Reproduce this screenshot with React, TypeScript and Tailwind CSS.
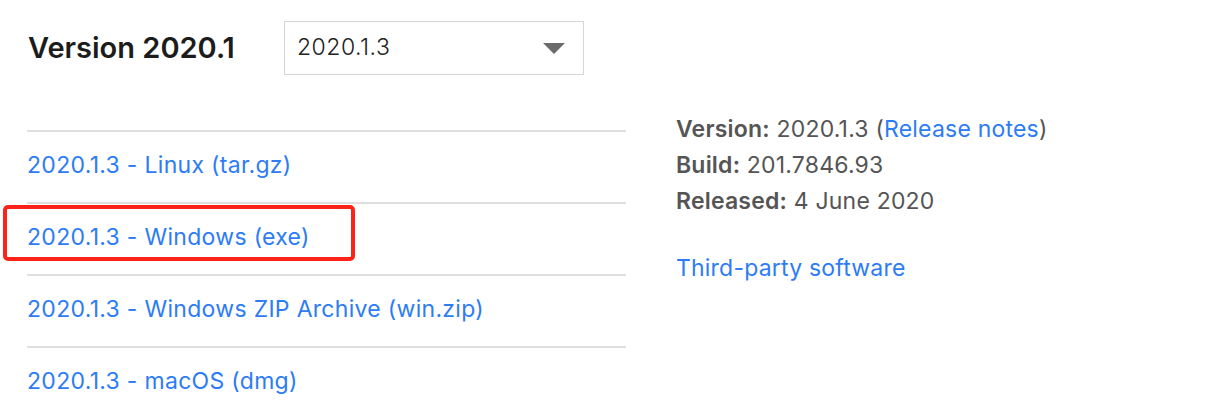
import React from 'react';

const links = [
  '2020.1.3 - Linux (tar.gz)',
  '2020.1.3 - Windows (exe)',
  '2020.1.3 - Windows ZIP Archive (win.zip)',
  '2020.1.3 - macOS (dmg)',
];

export default function App() {
  return (
    <div
      className="w-[1211px] h-[418px] overflow-hidden bg-white pl-[28px]"
      style={{ fontFamily: 'Inter, "Noto Sans", sans-serif' }}
    >
      {/* Header */}
      <div className="flex items-center pt-[21px]">
        <h2 className="w-[256px] text-[29px] font-semibold text-[#1c1c1c]">Version 2020.1</h2>
        <div className="w-[300px] h-[54px] border border-[#d6d6d6] flex items-start justify-between pl-[12px] pr-[18px] pt-[8px]">
          <span className="text-[23px] font-light text-[#222] tracking-[0.5px]">2020.1.3</span>
          <svg width="22" height="11" viewBox="0 0 22 11" className="mt-[13px]">
            <polygon points="0,0 22,0 11,11" fill="#6b6b6b" />
          </svg>
        </div>
      </div>

      <div className="flex">
        {/* Downloads */}
        <div className="w-[599px] mt-[55px] -ml-[1px]">
          {links.map((l, i) => (
            <div key={l} className="relative h-[72px] border-t-2 border-[#dedede] flex items-center">
              <a className="text-[23px] text-[#2d7cf6] tracking-[0.3px] -mt-[4px]">{l}</a>
              {i === 1 && (
                <div className="absolute left-[-24px] top-[1px] w-[352px] h-[56px] border-4 border-[#fe2319] rounded-[5px]" />
              )}
            </div>
          ))}
        </div>

        {/* Build info */}
        <div className="ml-[50px] mt-[36px] text-[23px] leading-[36px] text-[#555] tracking-[0.2px]">
          <div>
            <span className="font-semibold">Version:</span> 2020.1.3 (<a className="text-[#2d7cf6]">Release notes</a>)
          </div>
          <div>
            <span className="font-semibold">Build:</span> 201.7846.93
          </div>
          <div>
            <span className="font-semibold">Released:</span> 4 June 2020
          </div>
          <div className="mt-[31px]">
            <a className="text-[#2d7cf6]">Third-party software</a>
          </div>
        </div>
      </div>
    </div>
  );
}
